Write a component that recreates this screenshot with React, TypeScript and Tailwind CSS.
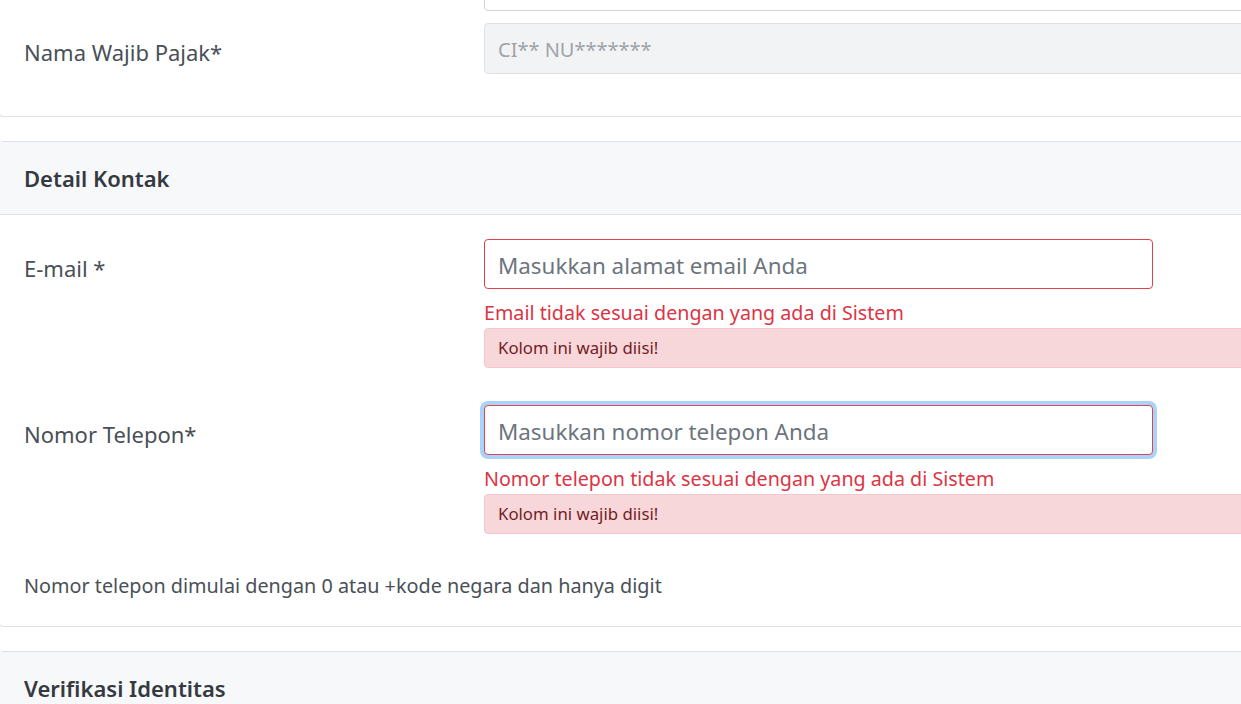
import React from 'react';

const font = { fontFamily: '"Noto Sans", "Open Sans", sans-serif' };

function FieldError({ message }: { message: string }) {
  return (
    <>
      <p className="mt-[11px] text-[19.7px] leading-[26px] text-[#dc3545]">{message}</p>
      <div className="mt-[2px] flex h-[40px] items-center rounded-[4px] border border-[#f5c6cb] bg-[#f8d7da] px-[13px] text-[16.8px] text-[#721c24]">
        Kolom ini wajib diisi!
      </div>
    </>
  );
}

export default function App() {
  return (
    <div className="h-[704px] w-[1241px] overflow-hidden bg-white" style={font}>
      <div className="-ml-px w-[1500px]">
        {/* Data Wajib Pajak (tail end) */}
        <div className="-mt-[10px] rounded-b-[4px] border border-t-0 border-[#dee2e6] px-6 pb-[42px]">
          <div className="ml-[460px] h-[21px] rounded-[4px] border border-[#ced4da] bg-white" />
          <div className="mt-[12px] flex">
            <label className="w-[460px] pt-[14px] text-[22px] leading-[30px] text-[#495057]">Nama Wajib Pajak*</label>
            <div className="flex h-[51px] flex-1 items-center rounded-[4px] border border-[#dee2e6] bg-[#f2f3f5] px-[13px] pt-[2px] text-[20px] text-[#9ea3a8]">
              CI** NU*******
            </div>
          </div>
        </div>

        {/* Detail Kontak */}
        <div className="mt-6 rounded-[4px] border border-[#dee2e6]">
          <div className="flex h-[73px] items-center border-b border-[#dee2e6] bg-[#f7f8fa] px-6 text-[22px] font-semibold text-[#343a40]">
            Detail Kontak
          </div>
          <div className="px-6 pb-[26px] pt-6">
            <div className="flex">
              <label className="w-[460px] pt-[14px] text-[22px] leading-[30px] text-[#495057]">E-mail *</label>
              <div className="flex-1">
                <input
                  readOnly
                  placeholder="Masukkan alamat email Anda"
                  className="h-[50px] w-[669px] rounded-[4px] border border-[#e0434f] bg-white px-[13px] pt-[3px] text-[22.4px] text-[#495057] outline-none placeholder:text-[#6c757d]"
                />
                <FieldError message="Email tidak sesuai dengan yang ada di Sistem" />
              </div>
            </div>

            <div className="mt-[37px] flex">
              <label className="w-[460px] pt-[14px] text-[22px] leading-[30px] text-[#495057]">Nomor Telepon*</label>
              <div className="flex-1">
                <input
                  readOnly
                  placeholder="Masukkan nomor telepon Anda"
                  className="h-[50px] w-[669px] rounded-[4px] border border-[#e0434f] bg-white px-[13px] pt-[3px] text-[22.4px] text-[#495057] shadow-[0_0_0_4px_#a8d4fb] outline-none placeholder:text-[#6c757d]"
                />
                <FieldError message="Nomor telepon tidak sesuai dengan yang ada di Sistem" />
              </div>
            </div>

            <p className="mt-[38px] text-[19.8px] leading-[28px] text-[#495057]">
              Nomor telepon dimulai dengan 0 atau +kode negara dan hanya digit
            </p>
          </div>
        </div>

        {/* Verifikasi Identitas */}
        <div className="mt-6 rounded-[4px] border border-[#dee2e6]">
          <div className="flex h-[73px] items-center border-b border-[#dee2e6] bg-[#f7f8fa] px-6 text-[22px] font-semibold text-[#343a40]">
            Verifikasi Identitas
          </div>
        </div>
      </div>
    </div>
  );
}
